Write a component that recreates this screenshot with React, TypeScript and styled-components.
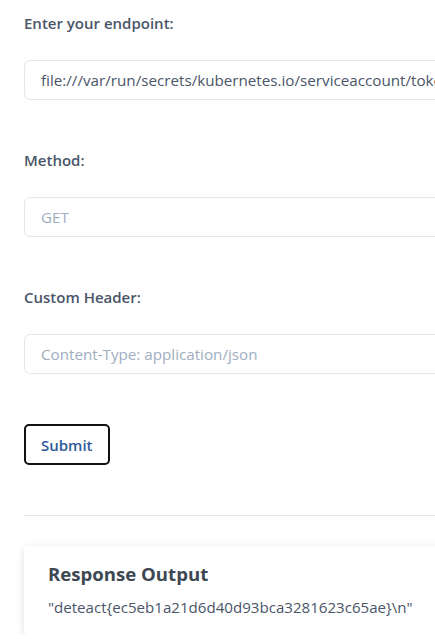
import React from "react";
import styled, { createGlobalStyle } from "styled-components";

const GlobalStyle = createGlobalStyle`
  html, body {
    margin: 0;
    padding: 0;
    background: #ffffff;
    overflow: hidden;
  }
  body {
    font-family: "Open Sans", "Noto Sans", sans-serif;
    color: #4a5568;
  }
  * { box-sizing: border-box; }
`;

const Page = styled.div`
  width: 760px;
  padding: 13px 24px 0 24px;
`;

const Form = styled.form`
  display: flex;
  flex-direction: column;
`;

const Field = styled.div`
  display: flex;
  flex-direction: column;
  margin-bottom: 50px;
`;

const Label = styled.label`
  display: block;
  font-size: 15px;
  line-height: 20px;
  font-weight: 600;
  color: #4a5568;
  margin-bottom: 27px;
`;

const Input = styled.input`
  width: 100%;
  height: 40px;
  padding: 0 16px;
  border: 1px solid #e2e8f0;
  border-radius: 6px;
  font-family: inherit;
  font-size: 15.2px;
  color: #4a5568;
  background: #ffffff;
  outline: none;
  &::placeholder {
    color: #a0aec0;
  }
`;

const SubmitButton = styled.button`
  align-self: flex-start;
  height: 41px;
  padding: 0 15px;
  border: 2px solid #111111;
  border-radius: 5px;
  background: #ffffff;
  font-family: inherit;
  font-size: 15px;
  font-weight: 600;
  color: #2f5b9a;
  cursor: pointer;
`;

const Divider = styled.hr`
  margin: 50px 0 30px 0;
  border: none;
  border-top: 1px solid #e2e8f0;
`;

const Card = styled.section`
  padding: 16px 24px 18px 24px;
  background: #ffffff;
  border-radius: 4px;
  box-shadow: 0 2px 8px rgba(0, 0, 0, 0.12);
`;

const CardTitle = styled.h2`
  margin: 0 0 11px 0;
  font-size: 18.6px;
  line-height: 24px;
  font-weight: 700;
  color: #3d4852;
`;

const Output = styled.p`
  margin: 0;
  font-size: 15.1px;
  line-height: 20px;
  color: #4a5568;
`;

export default function App() {
  return (
    <>
      <GlobalStyle />
      <Page>
        <Form onSubmit={(e) => e.preventDefault()}>
          <Field>
            <Label htmlFor="endpoint">Enter your endpoint:</Label>
            <Input
              id="endpoint"
              defaultValue="file:///var/run/secrets/kubernetes.io/serviceaccount/token"
            />
          </Field>
          <Field>
            <Label htmlFor="method">Method:</Label>
            <Input id="method" placeholder="GET" />
          </Field>
          <Field>
            <Label htmlFor="header">Custom Header:</Label>
            <Input id="header" placeholder="Content-Type: application/json" />
          </Field>
          <SubmitButton type="submit">Submit</SubmitButton>
        </Form>
        <Divider />
        <Card>
          <CardTitle>Response Output</CardTitle>
          <Output>"deteact{"{"}ec5eb1a21d6d40d93bca3281623c65ae{"}"}\n"</Output>
        </Card>
      </Page>
    </>
  );
}
